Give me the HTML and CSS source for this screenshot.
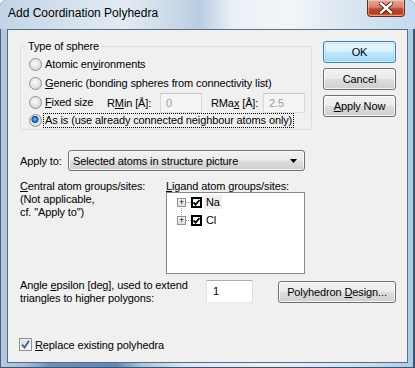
FILE: index.html
```html
<!DOCTYPE html>
<html lang="en">
<head>
    <meta charset="UTF-8">
    <title>Add Coordination Polyhedra</title>
    <link rel="stylesheet" href="styles.css">
</head>
<body>

    <div class="window">

        <!-- Title bar -->
        <div class="titlebar">
            <span class="title">Add Coordination Polyhedra</span>
            <span class="close">
                <svg width="14" height="12" viewBox="0 0 14 12">
                    <path d="M2 1.5 L12 10.5 M12 1.5 L2 10.5" stroke="#4a1c14" stroke-width="4.2" stroke-linecap="square"/>
                    <path d="M2 1.5 L12 10.5 M12 1.5 L2 10.5" stroke="#ffffff" stroke-width="2.4" stroke-linecap="square"/>
                </svg>
            </span>
        </div>

        <div class="client">

            <!-- Sphere type + dialog buttons -->
            <div class="top-row">
                <fieldset class="group">
                    <legend>Type of sphere</legend>
                    <div class="opt"><span class="radio"></span><span class="opt-text">Atomic en<u>v</u>ironments</span></div>
                    <div class="opt"><span class="radio"></span><span class="opt-text"><u>G</u>eneric (bonding spheres from connectivity list)</span></div>
                    <div class="opt">
                        <span class="radio"></span><span class="opt-text fixed"><u>F</u>ixed size</span>
                        <span class="rlabel">R<u>M</u>in [Å]:</span><span class="field disabled">0</span>
                        <span class="rlabel rmax">RMa<u>x</u> [Å]:</span><span class="field disabled">2.5</span>
                    </div>
                    <div class="opt last"><span class="radio on"></span><span class="opt-text focus">As is (use already connected neighbour atoms only)</span></div>
                </fieldset>

                <div class="buttons">
                    <button class="btn default">OK</button>
                    <button class="btn">Cancel</button>
                    <button class="btn"><u>A</u>pply Now</button>
                </div>
            </div>

            <!-- Apply to -->
            <div class="apply-row">
                <span class="apply-label">Apply to:</span>
                <div class="combo">
                    <span>Selected atoms in structure picture</span>
                    <svg width="7" height="4" viewBox="0 0 7 4"><path d="M0 0 H7 L3.5 4 Z" fill="#000"/></svg>
                </div>
            </div>

            <!-- Groups -->
            <div class="lists-row">
                <div class="central">
                    <u>C</u>entral atom groups/sites:<br>
                    (Not applicable,<br>
                    cf. "Apply to")
                </div>
                <div class="ligand">
                    <div class="ligand-label"><u>L</u>igand atom groups/sites:</div>
                    <div class="listbox">
                        <div class="tree-item">
                            <span class="expander">+</span><span class="dots"></span>
                            <span class="state"><svg width="7" height="7" viewBox="0 0 7 7"><path d="M0.5 3.5 L2.6 5.6 L6.5 1" stroke="#000" stroke-width="1.8" fill="none"/></svg></span>
                            <span class="item-text selected">Na</span>
                        </div>
                        <div class="tree-item">
                            <span class="expander">+</span><span class="dots"></span>
                            <span class="state"><svg width="7" height="7" viewBox="0 0 7 7"><path d="M0.5 3.5 L2.6 5.6 L6.5 1" stroke="#000" stroke-width="1.8" fill="none"/></svg></span>
                            <span class="item-text">Cl</span>
                        </div>
                    </div>
                </div>
            </div>

            <!-- Angle epsilon -->
            <div class="angle-row">
                <div class="angle-text">Angle <u>e</u>psilon [deg], used to extend<br>triangles to higher polygons:</div>
                <span class="field angle">1</span>
                <button class="btn design">Polyhedron <u>D</u>esign...</button>
            </div>

            <div class="replace-row">
                <span class="check">
                    <svg width="9" height="9" viewBox="0 0 9 9"><path d="M1 4.5 L3.5 7.5 L8 0.8" stroke="#3d5a9a" stroke-width="1.8" fill="none"/></svg>
                </span>
                <span><u>R</u>eplace existing polyhedra</span>
            </div>

        </div>
    </div>

</body>
</html>
```

FILE: styles.css
```css
/* General */
body {
    margin: 0;
    font-family: "Liberation Sans", Arial, sans-serif;
    font-size: 11px;
    color: #000;
}

u {
    text-decoration: underline;
    text-underline-offset: 1px;
}

/* Window frame */
.window {
    width: 415px;
    height: 368px;
    box-sizing: border-box;
    display: flex;
    flex-direction: column;
    padding: 0 7px 5px;
    background: linear-gradient(90deg, #b4c9de 0%, #a6bfd8 6%, #6a8fbe 12%, #5e86b8 28%, #a9c2dc 34%, #dde8f2 45%, #e9f0f6 65%, #d3e3f0 85%, #a9cbe6 100%);
    border-radius: 6px 6px 0 0;
    box-shadow: inset -2px 0 0 #3e546c, inset 1px 0 0 #4b5e74, inset 0 -1px 0 #3e546c;
}

.titlebar {
    height: 29px;
    margin: 0 -7px;
    padding: 0 10px 0 8px;
    display: flex;
    justify-content: space-between;
    align-items: flex-start;
    background: linear-gradient(90deg, #c2d4e6 0%, #d3e0ec 15%, #e2ebf3 30%, #c9d8e7 42%, #b9cde1 48%, #e9f0f6 56%, #f3f6f9 70%, #dde8f2 82%, #c4daee 100%);
    border-radius: 6px 6px 0 0;
}

.title {
    padding-top: 6px;
    font-size: 12px;
    line-height: 15px;
    color: #000;
}

.close {
    width: 38px;
    height: 17px;
    box-sizing: border-box;
    display: flex;
    align-items: center;
    justify-content: center;
    border: 1px solid #6a2a1e;
    border-top: none;
    border-radius: 0 0 4px 4px;
    background: linear-gradient(#e7a796 0%, #d7806c 45%, #c24a31 55%, #b8391f 80%, #d0684d 100%);
    box-shadow: inset 0 0 0 1px rgba(255, 220, 210, 0.5);
}

/* Client area */
.client {
    flex: 1;
    display: flex;
    flex-direction: column;
    background: #f0f0f0;
    border: 1px solid #5b6d82;
    padding: 10px 11px 0 12px;
    letter-spacing: -0.12px;
}

.top-row {
    display: flex;
    gap: 11px;
    align-items: flex-start;
}

/* Group box */
.group {
    width: 292px;
    box-sizing: border-box;
    margin: 0;
    padding: 2px 5px 0 5px;
    border: 1px solid #d5dfe5;
    border-radius: 3px;
    min-width: 0;
}

.group legend {
    padding: 0 2px;
    line-height: 13px;
}

.opt {
    display: flex;
    align-items: center;
    height: 19px;
    padding-left: 3px;
}

.opt.last {
    height: 17px;
}

.opt-text {
    padding-left: 1px;
    line-height: 13px;
    white-space: nowrap;
}

.opt-text.fixed {
    width: 62px;
}

.opt-text.focus {
    border: 1px dotted #000;
    padding: 0 1px;
    margin-left: -1px;
}

.radio {
    width: 13px;
    height: 13px;
    box-sizing: border-box;
    flex: none;
    margin-right: 2px;
    border-radius: 50%;
    border: 1px solid #939393;
    background: radial-gradient(circle at 45% 40%, #fbfbfb 0, #e6e6e6 45%, #c6c6c6 100%);
}

.radio.on {
    background:
        radial-gradient(circle at 45% 40%, #8fd0ff 0, #2e86d2 1.6px, #13508e 3.3px, transparent 3.9px),
        radial-gradient(circle at 45% 40%, #fbfbfb 0, #e6e6e6 45%, #c6c6c6 100%);
}

.rlabel {
    width: 53px;
    white-space: nowrap;
}

.rlabel.rmax {
    margin-left: 9px;
    width: 52px;
}

.field {
    box-sizing: border-box;
    height: 20px;
    width: 42px;
    display: flex;
    align-items: center;
    padding-left: 5px;
    border: 1px solid #abadb3;
    border-color: #abadb3 #dbdfe6 #e3e9ef #e2e3ea;
    background: #fff;
}

.field.disabled {
    background: #f4f4f4;
    border-color: #c5c5c5 #d8d8d8 #dddddd #d8d8d8;
    color: #9d9d9d;
}

/* Buttons */
.buttons {
    display: flex;
    flex-direction: column;
    gap: 5px;
    margin-top: 1px;
}

.btn {
    width: 73px;
    height: 22px;
    box-sizing: border-box;
    padding: 0;
    font-family: inherit;
    font-size: 11px;
    letter-spacing: -0.12px;
    color: #000;
    border: 1px solid #707070;
    border-radius: 3px;
    background: linear-gradient(#f2f2f2 0%, #ebebeb 48%, #dddddd 52%, #cfcfcf 100%);
    box-shadow: inset 0 0 0 1px rgba(255, 255, 255, 0.75);
}

.btn.default {
    border-color: #3c7fb1;
    background: linear-gradient(#eaf6fd 0%, #d9f0fc 48%, #bee6fd 52%, #a7d9f5 100%);
    box-shadow: inset 0 0 0 1px rgba(255, 255, 255, 0.6), inset 0 0 0 2px rgba(120, 200, 240, 0.35);
}

/* Apply to */
.apply-row {
    display: flex;
    align-items: center;
    margin-top: 20px;
    height: 21px;
}

.apply-label {
    width: 48px;
}

.combo {
    width: 237px;
    height: 21px;
    box-sizing: border-box;
    display: flex;
    align-items: center;
    justify-content: space-between;
    padding: 0 7px 0 4px;
    border: 1px solid #707070;
    border-radius: 3px;
    background: linear-gradient(#f2f2f2 0%, #ebebeb 48%, #dddddd 52%, #cfcfcf 100%);
    box-shadow: inset 0 0 0 1px rgba(255, 255, 255, 0.75);
}

/* Group lists */
.lists-row {
    display: flex;
    margin-top: 9px;
    line-height: 13px;
}

.central {
    width: 146px;
}

.ligand-label {
    line-height: 12px;
}

.listbox {
    width: 139px;
    height: 82px;
    box-sizing: border-box;
    border: 1px solid #828790;
    background: #fff;
}

.tree-item {
    display: flex;
    align-items: center;
    height: 18px;
    position: relative;
}

.expander {
    width: 9px;
    height: 9px;
    box-sizing: border-box;
    margin-left: 10px;
    border: 1px solid #919191;
    background: linear-gradient(#fff, #dcdcdc);
    font-size: 9px;
    line-height: 6px;
    text-align: center;
    color: #000;
}

.dots {
    width: 5px;
    border-top: 1px dotted #a0a0a0;
}

.tree-item:first-child::after {
    content: "";
    position: absolute;
    left: 14px;
    top: 13px;
    height: 9px;
    border-left: 1px dotted #a0a0a0;
}

.state {
    width: 11px;
    height: 11px;
    box-sizing: border-box;
    border: 2px solid #000;
    background: #fff;
    display: flex;
    align-items: center;
    justify-content: center;
}

.item-text {
    margin-left: 2px;
    padding: 0 2px;
    line-height: 14px;
}

.item-text.selected {
    background: #efefef;
}

/* Angle epsilon */
.angle-row {
    display: flex;
    align-items: flex-start;
    margin-top: 5px;
    line-height: 13px;
}

.angle-text {
    width: 186px;
    white-space: nowrap;
}

.field.angle {
    width: 47px;
    height: 23px;
    margin-top: 1px;
    padding-left: 6px;
}

.btn.design {
    width: 118px;
    margin-left: 25px;
    margin-top: 2px;
}

/* Replace checkbox */
.replace-row {
    display: flex;
    align-items: center;
    margin-top: 31px;
    margin-left: -1px;
    height: 17px;
}

.check {
    width: 13px;
    height: 13px;
    box-sizing: border-box;
    margin-right: 3px;
    border: 1px solid #8f8f8f;
    background: linear-gradient(135deg, #d8d8d8, #fbfbfb);
    box-shadow: inset 0 0 0 1px #f4f4f4;
    display: flex;
    align-items: center;
    justify-content: center;
}
```
